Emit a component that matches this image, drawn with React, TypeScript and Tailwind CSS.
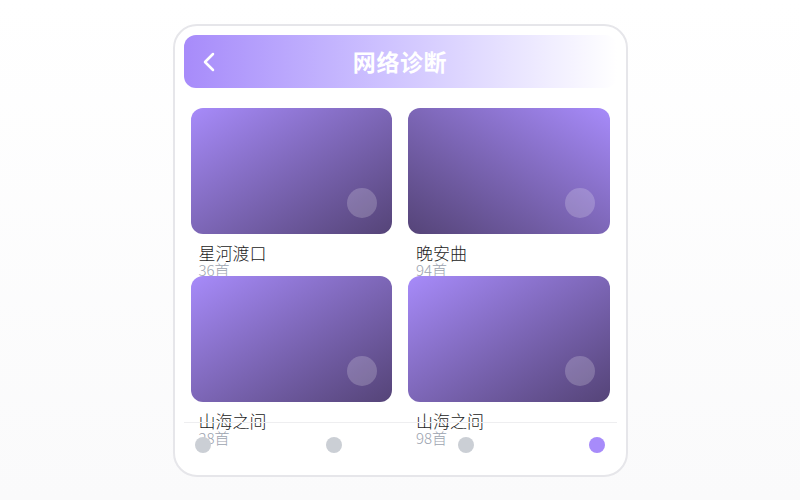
import React from "react";

const albums = [
  { title: "星河渡口", count: "36首", dir: "bg-gradient-to-br" },
  { title: "晚安曲", count: "94首", dir: "bg-gradient-to-bl" },
  { title: "山海之间", count: "28首", dir: "bg-gradient-to-br" },
  { title: "山海之间", count: "98首", dir: "bg-gradient-to-br" },
];

function AlbumCard({ title, count, dir }: { title: string; count: string; dir: string }) {
  return (
    <div className="h-[168px]">
      <div className={`relative h-[126px] rounded-xl ${dir} from-[#a78bfa] to-[#554478]`}>
        <div className="absolute right-[15px] bottom-[16px] w-[30px] h-[30px] rounded-full bg-white/20" />
      </div>
      <div className="px-2 pt-[9px] font-light">
        <div className="text-[17px] leading-[19px] text-[#222]">{title}</div>
        <div className="text-[15px] leading-[16px] text-[#9ca3af]">{count}</div>
      </div>
    </div>
  );
}

export default function App() {
  return (
    <div
      className="min-h-screen flex items-center justify-center bg-gradient-to-b from-white to-[#fafafb]"
      style={{ fontFamily: '"Noto Sans CJK SC", "Noto Sans", sans-serif' }}
    >
      <div className="relative w-[455px] h-[453px] rounded-[24px] border-2 border-[#e6e6ea] bg-white overflow-hidden flex flex-col">
        {/* header */}
        <div className="relative mx-[9px] mt-[9px] h-[53px] rounded-xl bg-gradient-to-r from-[#a78bfa] to-white flex items-center justify-center">
          <svg
            className="absolute left-[19px] top-[17px]"
            width="12"
            height="20"
            viewBox="0 0 12 20"
            fill="none"
            stroke="white"
            strokeWidth="2.5"
            strokeLinecap="round"
            strokeLinejoin="round"
          >
            <polyline points="10,2 2,10 10,18" />
          </svg>
          <h1 className="text-[23px] font-bold text-white tracking-wide">网络诊断</h1>
        </div>

        {/* album grid */}
        <div className="px-4 pt-5 grid grid-cols-2 gap-x-4">
          {albums.map((a, i) => (
            <AlbumCard key={i} {...a} />
          ))}
        </div>

        {/* bottom tabs */}
        <div className="absolute left-[9px] right-[9px] bottom-0 h-[53px] border-t border-[#eeeef0] flex justify-between px-[11px] pt-[14px]">
          <span className="w-4 h-4 rounded-full bg-[#cbcfd5]" />
          <span className="w-4 h-4 rounded-full bg-[#cbcfd5]" />
          <span className="w-4 h-4 rounded-full bg-[#cbcfd5]" />
          <span className="w-4 h-4 rounded-full bg-[#a78bfa]" />
        </div>
      </div>
    </div>
  );
}
